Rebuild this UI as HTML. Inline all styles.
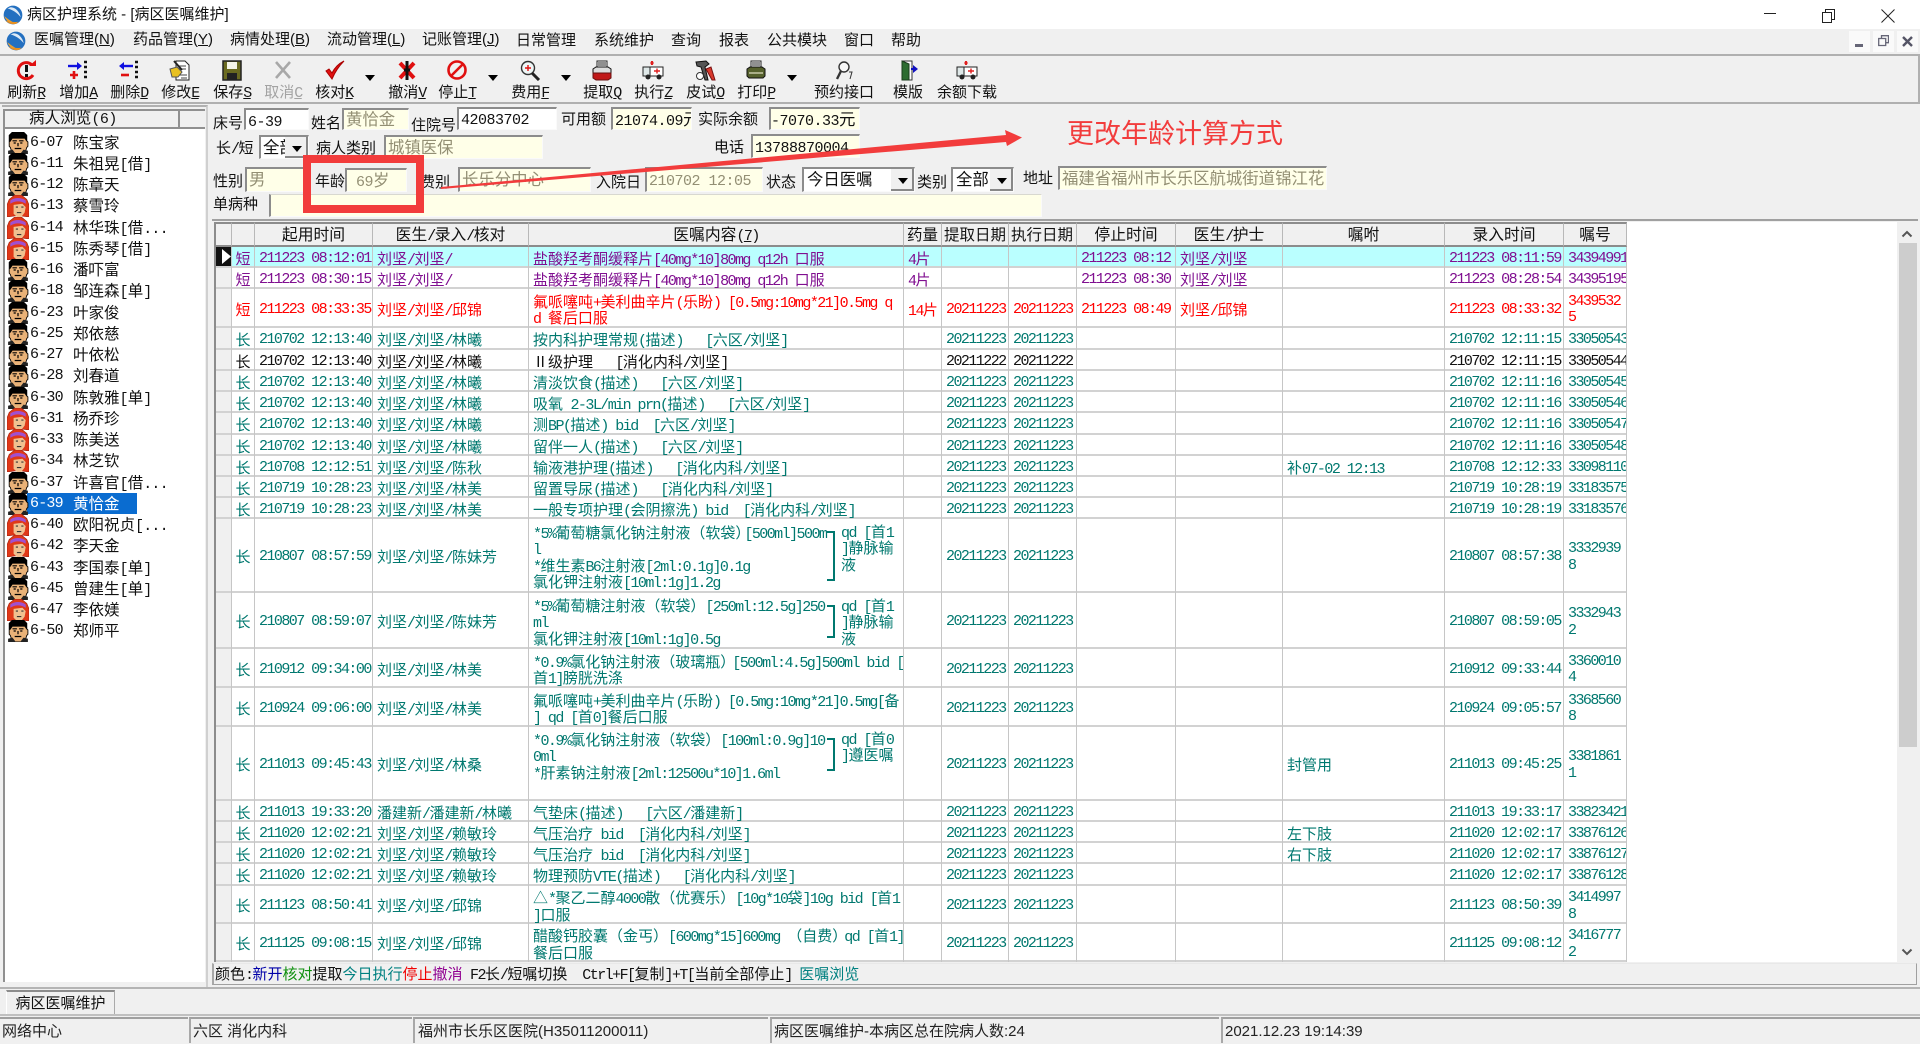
<!DOCTYPE html>
<html lang="zh-CN">
<head>
<meta charset="utf-8">
<title>病区护理系统</title>
<style>
*{box-sizing:border-box}
html,body{margin:0;padding:0}
body{width:1920px;height:1043px;overflow:hidden;position:relative;background:#f0f0f0;font:15px/20px "WenQuanYi Zen Hei","Noto Sans CJK SC",sans-serif;color:#111;white-space:pre}
.abs,.l,.i,.t,.ln,.st,.q,.br{position:absolute}
a{font-family:"Liberation Mono",monospace;letter-spacing:-1.55px;font-size:15px;line-height:10px}
u{font-family:"Liberation Mono",monospace;letter-spacing:-1.55px;line-height:10px}
.ms{font-family:"Liberation Sans","WenQuanYi Zen Hei",sans-serif}
.i{height:24px;border-top:2px solid #8c8c8c;border-left:2px solid #8c8c8c;border-right:1px solid #fafafa;border-bottom:1px solid #fafafa;background:#ffffe8;color:#938f74;padding:0 0 0 2px;line-height:19px;overflow:hidden;font-size:16.4px}
.i a{letter-spacing:-.5px}
.i.w{background:#fff;color:#111}.i.y{color:#111}
.sel{background:#fff;color:#111;border-top:2px solid #8c8c8c;border-left:2px solid #8c8c8c}
.sel:after{content:"";position:absolute;right:0;top:0;bottom:0;width:21px;background:#f0f0f0;border-bottom:2px solid #888;border-right:2px solid #888}
.sel:before{content:"";position:absolute;z-index:1;right:6px;top:9px;border:5px solid transparent;border-top:6px solid #000;border-bottom:0}
.t{top:60px;width:90px;margin-left:-45px;text-align:center}
.t svg{display:block;margin:0 auto;width:24px;height:21px}
.t span{display:block;margin-top:1px;line-height:20px}
.off{color:#a3a3a3}
.dr{position:absolute;top:75px;border:5.5px solid transparent;border-top:6px solid #000;border-bottom:0}
.m{position:absolute;top:30px;line-height:20px}
#list{position:absolute;left:8px;top:131.5px;width:196px;font-size:15.5px}
.ln{left:0;width:190px;height:21.26px;line-height:21px}
.ln svg{position:absolute;left:-1px;top:0;width:22px;height:22px}
.ln b{position:absolute;left:22px;font:15px/21px "Liberation Mono",monospace;letter-spacing:-.8px}
.ln i{position:absolute;left:65px;font-style:normal}
.ln i a{font-size:15px;letter-spacing:-.8px}
table{position:absolute;left:214px;top:222px;width:1413px;table-layout:fixed;border-collapse:separate;border-spacing:0;background:#fff;line-height:16.4px}
td,th{padding:3px 0 0 4px;overflow:hidden;border-right:1px solid #c6c6c6;box-shadow:inset 0 -2px 0 #d2d2d2;vertical-align:middle;text-align:left;font-weight:normal}
th{background:#f0f0f0;border-top:2px solid #8c8c8c;border-bottom:2px solid #8c8c8c;border-right:1px solid #b8b8b8;box-shadow:none;text-align:center;padding:0;color:#111;font-size:15.8px}
th.lf{text-align:left;padding-left:2px;font-size:15.5px}
td:first-child{background:#f0f0f0;border-left:2px solid #8c8c8c;padding:0}
th:first-child{border-left:2px solid #8c8c8c}
td:nth-child(2){text-align:center;padding-left:0;padding-right:0}
.n{font-family:"Liberation Mono",monospace;letter-spacing:-1.55px;font-size:15px}
.g td,.g{color:#00786f}.p td{color:#800f90}.r td{color:#f00}.k td{color:#111}
.p.c td:not(:first-child){background:#baffff}
.bk td:first-child{background:#111;position:relative}
.q{left:841px;line-height:16.4px;color:#00786f}
.br{left:827px;width:8px;border:2px solid #00786f;border-left:0}
.st{top:1017px;height:26px;border-top:2px solid #a0a0a0;border-left:2px solid #a8a8a8;line-height:25px;padding-left:2px;font-family:"Liberation Sans","WenQuanYi Zen Hei",sans-serif;font-size:15px;color:#222}
</style>
</head>
<body>
<svg width="0" height="0" style="position:absolute">
<defs>
<symbol id="mf" viewBox="0 0 20 20"><path d="M2 8V3l3-3h10l3 3v5l1 1v4l-1 1-1 3-3 3H7l-3-3-1-3-1-1V9z" fill="#e9b278" stroke="#000" stroke-width=".8"/><path d="M2 9V3l3-3h10l3 3v6l-2-3H5L3 9z" fill="#000"/><path d="M5 8h4M11 8h4M6 10h2M12 10h2M10 10v3M7 15h6" stroke="#000" stroke-width="1.1" fill="none"/><path d="M1 17l4-1 3 4H1zM19 17l-4-1-3 4h7z" fill="#222"/></symbol>
<symbol id="ff" viewBox="0 0 20 20"><path d="M0 20V9l2-5 5-4h6l5 4 2 5v11l-7-1H7z" fill="#e03818" stroke="#a02010" stroke-width=".6"/><path d="M3 5c4-3 10-3 14 0v3c-4-3-10-3-14 0z" fill="#a050d0"/><path d="M6 9l8-1 3 3-1 5-3 4H9l-3-3z" fill="#f0c090"/><path d="M8 11h2M13 11h2M9 16h4" stroke="#333" fill="none"/></symbol>
<symbol id="amb" viewBox="0 0 24 21"><path d="M11 1v4" stroke="#e02020" stroke-width="2"/><circle cx="11" cy="3" r="1.6" fill="#e02020"/><path d="M2 7h20v9H2z" fill="#fff" stroke="#222"/><path d="M2 7h7v9H2z" fill="#dfe8e8" stroke="#222"/><path d="M13 11h6M16 8.5v5" stroke="#e02020" stroke-width="1.4"/><circle cx="7" cy="17" r="2.5" fill="#222"/><circle cx="18" cy="17" r="2.5" fill="#222"/></symbol>
<symbol id="prn" viewBox="0 0 24 21"><path d="M7 1h10v7H7z" fill="#fff" stroke="#222"/><path d="M8 3h8M8 5h8" stroke="#222"/><path d="M3 9l3-2h12l3 2v7l-2 2H5l-2-2z" fill="#55602c" stroke="#111"/><path d="M5 13h14" stroke="#d0d0b0" stroke-width="1.4"/></symbol>
</defs>
</svg>

<!-- title bar -->
<div class="abs" style="left:0;top:0;width:1920px;height:29px;background:#fff"></div>
<svg class="abs" style="left:3px;top:4px" width="20" height="22" viewBox="0 0 18 20"><circle cx="9" cy="10" r="8.5" fill="#2470c0"/><path d="M1 11c2 5 7 8 11 7-3-1-7-4-11-7z" fill="#eea030"/><path d="M2 15c3 3 7 4 10 3l2-2c-4 1-9 0-12-1z" fill="#e89020"/><path d="M4 4c4 1 9 4 12 8-1-5-5-9-9-9z" fill="#fff" opacity=".85"/></svg>
<div class="abs ms" style="left:27px;top:5px;font-size:15px;color:#111">病区护理系统 - [病区医嘱维护]</div>
<div class="abs" style="left:1764px;top:13px;width:12px;height:1px;background:#222"></div>
<svg class="abs" style="left:1822px;top:9px" width="13" height="15" fill="none" stroke="#222"><path d="M.5 3.5h9v10h-9zM3.5 3V.5h9v10H10"/></svg>
<svg class="abs" style="left:1881px;top:9px" width="14" height="14" fill="none" stroke="#222"><path d="M.5.5l13 13M13.5.5l-13 13"/></svg>

<!-- menu -->
<div class="abs" style="left:0;top:29px;width:1920px;height:27px;background:#f0f0f0;border-bottom:2px solid #b0b0b0"></div>
<svg class="abs" style="left:6px;top:30px" width="20" height="22" viewBox="0 0 18 20"><circle cx="9" cy="10" r="8.5" fill="#2470c0"/><path d="M1 11c2 5 7 8 11 7-3-1-7-4-11-7z" fill="#eea030"/><path d="M2 15c3 3 7 4 10 3l2-2c-4 1-9 0-12-1z" fill="#e89020"/><path d="M4 4c4 1 9 4 12 8-1-5-5-9-9-9z" fill="#fff" opacity=".85"/></svg>
<div class="m ms" style="left:34px">医嘱管理(<span style="text-decoration:underline">N</span>)</div>
<div class="m ms" style="left:133px">药品管理(<span style="text-decoration:underline">Y</span>)</div>
<div class="m ms" style="left:230px">病情处理(<span style="text-decoration:underline">B</span>)</div>
<div class="m ms" style="left:327px">流动管理(<span style="text-decoration:underline">L</span>)</div>
<div class="m ms" style="left:422px">记账管理(<span style="text-decoration:underline">J</span>)</div>
<div class="m" style="left:516px">日常管理</div>
<div class="m" style="left:594px">系统维护</div>
<div class="m" style="left:671px">查询</div>
<div class="m" style="left:719px">报表</div>
<div class="m" style="left:767px">公共模块</div>
<div class="m" style="left:844px">窗口</div>
<div class="m" style="left:891px">帮助</div>
<div class="abs" style="left:1849px;top:31px;width:21px;height:21px;background:#fafafa"><div class="abs" style="left:6px;top:13px;width:8px;height:3px;background:#667"></div></div>
<div class="abs" style="left:1873px;top:31px;width:21px;height:21px;background:#fafafa"><svg class="abs" style="left:5px;top:4px" width="11" height="12" fill="none" stroke="#667" stroke-width="1.3"><path d="M.7 3.5h7v7h-7zM3.5 3V.7h7v7H8"/></svg></div>
<div class="abs" style="left:1897px;top:31px;width:21px;height:21px;background:#fafafa"><svg class="abs" style="left:5px;top:5px" width="11" height="11" stroke="#556" stroke-width="2.4"><path d="M1 1l9 9M10 1l-9 9"/></svg></div>

<!-- toolbar -->
<div class="abs" style="left:0;top:56px;width:1920px;height:48px;border-bottom:2px solid #b0b0b0;border-right:2px solid #b0b0b0"></div>
<div class="t" style="left:26px"><svg viewBox="0 0 24 21"><path d="M18 5a8 8 0 1 0 1 10" fill="none" stroke="#e01010" stroke-width="3"/><path d="M15 6h7V0z" fill="#e01010"/><path d="M11 5h3v7h-3zM11 14h3v3h-3z" fill="#111"/></svg><span>刷新<u>R</u></span></div>
<div class="t" style="left:78px"><svg viewBox="0 0 24 21"><path d="M2 6h10" stroke="#1010e0" stroke-width="2.4"/><path d="M11 2l5 4-5 4z" fill="#1010e0"/><path d="M8 11v8M4 15h8" stroke="#e01010" stroke-width="2.6"/><path d="M18 2h3M18 7h3M18 12h3M18 17h3" stroke="#111" stroke-width="2.6"/></svg><span>增加<u>A</u></span></div>
<div class="t" style="left:129px"><svg viewBox="0 0 24 21"><path d="M6 6h10" stroke="#1010e0" stroke-width="2.4"/><path d="M7 2L2 6l5 4z" fill="#1010e0"/><path d="M4 15h8" stroke="#e01010" stroke-width="2.6"/><path d="M18 2h3M18 7h3M18 12h3M18 17h3" stroke="#111" stroke-width="2.6"/></svg><span>删除<u>D</u></span></div>
<div class="t" style="left:180px"><svg viewBox="0 0 24 21"><path d="M8 1h9l4 4v15H8z" fill="#fff" stroke="#222"/><path d="M10 6h8M10 9h8M11 15h8M13 18h6" stroke="#444"/><path d="M2 9l7-2 5 5-4 5H4z" fill="#e8c020" stroke="#555"/><path d="M6 1l8 9" stroke="#222" stroke-width="2"/></svg><span>修改<u>E</u></span></div>
<div class="t" style="left:232px"><svg viewBox="0 0 24 21"><path d="M3 1h18v19H3z" fill="#6a6a20" stroke="#222" stroke-width="1.5"/><path d="M7 2h10v7H7z" fill="#f4f4e8"/><path d="M7 13h10v7H7z" fill="#222"/></svg><span>保存<u>S</u></span></div>
<div class="t off" style="left:283px"><svg viewBox="0 0 24 21"><path d="M5 2l14 16M19 2L5 18" stroke="#a8a8a8" stroke-width="2.6"/></svg><span>取消<u>C</u></span></div>
<div class="t" style="left:334px"><svg viewBox="0 0 24 21"><path d="M4 11l6 8C13 12 17 6 22 1c-6 3-10 8-12 12L7 9z" fill="#e01010" stroke="#a00"/></svg><span>核对<u>K</u></span></div>
<div class="dr" style="left:365px"></div>
<div class="t" style="left:407px"><svg viewBox="0 0 24 21"><path d="M5 3l14 15M19 3L5 18" stroke="#e01010" stroke-width="4"/><path d="M12 1v19" stroke="#111" stroke-width="3"/><path d="M9 10h6" stroke="#111" stroke-width="3"/></svg><span>撤消<u>V</u></span></div>
<div class="t" style="left:457px"><svg viewBox="0 0 24 21"><circle cx="12" cy="10" r="8.5" fill="none" stroke="#e01010" stroke-width="2.6"/><path d="M6 16L18 4" stroke="#e01010" stroke-width="2.6"/></svg><span>停止<u>T</u></span></div>
<div class="dr" style="left:488px"></div>
<div class="t" style="left:530px"><svg viewBox="0 0 24 21"><circle cx="10" cy="8" r="6.5" fill="#eef6f6" stroke="#333" stroke-width="1.4"/><path d="M7 8h6M10 5v6" stroke="#e01010" stroke-width="1.4"/><path d="M14 13l7 7" stroke="#222" stroke-width="3"/></svg><span>费用<u>F</u></span></div>
<div class="dr" style="left:561px"></div>
<div class="t" style="left:602px"><svg viewBox="0 0 24 21"><path d="M7 1h10v7H7z" fill="#fff" stroke="#222"/><path d="M8 3h8M8 5h8" stroke="#222"/><path d="M3 9l3-2h12l3 2v4H3z" fill="#ddd" stroke="#111"/><path d="M3 13h18v5l-3 2H6l-3-2z" fill="#c01818" stroke="#611"/></svg><span>提取<u>Q</u></span></div>
<div class="t" style="left:653px"><svg viewBox="0 0 24 21"><use href="#amb"/></svg><span>执行<u>Z</u></span></div>
<div class="t" style="left:705px"><svg viewBox="0 0 24 21"><path d="M3 2l10-1 3 3-4 3 3 13h-3L8 7 4 6z" fill="#555" stroke="#111"/><path d="M13 9l6 11h3l-4-13z" fill="#d8382c" stroke="#711"/><circle cx="7" cy="16" r="3.5" fill="#fff" stroke="#333"/></svg><span>皮试<u>O</u></span></div>
<div class="t" style="left:756px"><svg viewBox="0 0 24 21"><use href="#prn"/></svg><span>打印<u>P</u></span></div>
<div class="dr" style="left:787px"></div>
<div class="t" style="left:844px"><svg viewBox="0 0 24 21"><circle cx="12" cy="7" r="5" fill="#f8f8f8" stroke="#333" stroke-width="1.4"/><path d="M9 11l-4 8" stroke="#333" stroke-width="2.4"/><path d="M17 12h3l-2 7" fill="none" stroke="#333"/></svg><span>预约接口</span></div>
<div class="t" style="left:908px"><svg viewBox="0 0 24 21"><path d="M6 1h10v19H6z" fill="#fff" stroke="#333"/><path d="M6 1l7 3v16H6z" fill="#2c6c30" stroke="#1a3c1c"/><path d="M15 9h5" stroke="#1010c0" stroke-width="2"/><path d="M17 5l5 4-5 4z" fill="#1010c0"/></svg><span>模版</span></div>
<div class="t" style="left:967px"><svg viewBox="0 0 24 21"><use href="#amb"/></svg><span>余额下载</span></div>

<!-- left panel -->
<div class="abs" style="left:2px;top:105px;width:206px;height:882px;background:#f0f0f0;border-top:2px solid #b0b0b0;border-right:2px solid #d0d0d0"></div>
<div class="abs" style="left:3px;top:109px;width:202px;height:20px;border-top:2px solid #909090;border-left:2px solid #909090;border-bottom:2px solid #909090;background:#f0f0f0"></div>
<div class="abs" style="left:178px;top:111px;width:2px;height:16px;background:#909090"></div>
<div class="abs" style="left:29px;top:107px;line-height:21px;font-size:15.6px">病人浏览<a style="letter-spacing:-.5px">(6)</a></div>
<div class="abs" style="left:3px;top:129px;width:202px;height:853px;background:#fff;border-left:2px solid #909090"></div>
<div id="list">
<div class="ln" style="top:0"><svg><use href="#mf"/></svg><b>6-07</b><i>陈宝家</i></div>
<div class="ln" style="top:21.26px"><svg><use href="#mf"/></svg><b>6-11</b><i>朱祖晃<a>[</a>借<a>]</a></i></div>
<div class="ln" style="top:42.52px"><svg><use href="#mf"/></svg><b>6-12</b><i>陈章天</i></div>
<div class="ln" style="top:63.78px"><svg><use href="#ff"/></svg><b>6-13</b><i>蔡雪玲</i></div>
<div class="ln" style="top:85.04px"><svg><use href="#ff"/></svg><b>6-14</b><i>林华珠<a>[</a>借<a>...</a></i></div>
<div class="ln" style="top:106.3px"><svg><use href="#ff"/></svg><b>6-15</b><i>陈秀琴<a>[</a>借<a>]</a></i></div>
<div class="ln" style="top:127.56px"><svg><use href="#mf"/></svg><b>6-16</b><i>潘吓富</i></div>
<div class="ln" style="top:148.82px"><svg><use href="#mf"/></svg><b>6-18</b><i>邹连森<a>[</a>单<a>]</a></i></div>
<div class="ln" style="top:170.08px"><svg><use href="#mf"/></svg><b>6-23</b><i>叶家俊</i></div>
<div class="ln" style="top:191.34px"><svg><use href="#mf"/></svg><b>6-25</b><i>郑依慈</i></div>
<div class="ln" style="top:212.6px"><svg><use href="#mf"/></svg><b>6-27</b><i>叶依松</i></div>
<div class="ln" style="top:233.86px"><svg><use href="#mf"/></svg><b>6-28</b><i>刘春道</i></div>
<div class="ln" style="top:255.12px"><svg><use href="#mf"/></svg><b>6-30</b><i>陈敦雅<a>[</a>单<a>]</a></i></div>
<div class="ln" style="top:276.38px"><svg><use href="#ff"/></svg><b>6-31</b><i>杨乔珍</i></div>
<div class="ln" style="top:297.64px"><svg><use href="#ff"/></svg><b>6-33</b><i>陈美送</i></div>
<div class="ln" style="top:318.9px"><svg><use href="#ff"/></svg><b>6-34</b><i>林芝钦</i></div>
<div class="ln" style="top:340.16px"><svg><use href="#mf"/></svg><b>6-37</b><i>许喜官<a>[</a>借<a>...</a></i></div>
<div class="ln" style="top:361.42px"><div class="abs" style="left:19px;top:0;width:110px;height:21px;background:#0a6cd0"></div><svg><use href="#mf"/></svg><b style="color:#fff">6-39</b><i style="color:#fff">黄恰金</i></div>
<div class="ln" style="top:382.68px"><svg><use href="#ff"/></svg><b>6-40</b><i>欧阳祝贞<a>[...</a></i></div>
<div class="ln" style="top:403.94px"><svg><use href="#ff"/></svg><b>6-42</b><i>李天金</i></div>
<div class="ln" style="top:425.2px"><svg><use href="#mf"/></svg><b>6-43</b><i>李国泰<a>[</a>单<a>]</a></i></div>
<div class="ln" style="top:446.46px"><svg><use href="#mf"/></svg><b>6-45</b><i>曾建生<a>[</a>单<a>]</a></i></div>
<div class="ln" style="top:467.72px"><svg><use href="#ff"/></svg><b>6-47</b><i>李依媄</i></div>
<div class="ln" style="top:488.98px"><svg><use href="#mf"/></svg><b>6-50</b><i>郑师平</i></div>
</div>

<!-- form -->
<div class="l" style="left:213px;top:113px">床号</div>
<div class="i w" style="left:244px;top:108px;width:65px;height:22px;line-height:18px"><a>6-39</a></div>
<div class="l" style="left:311px;top:113px">姓名</div>
<div class="i" style="left:342px;top:108px;width:67px;height:22px;line-height:17px">黄恰金</div>
<div class="l" style="left:411px;top:115px">住院号</div>
<div class="i w" style="left:457px;top:107px;width:100px;height:23px;line-height:17px"><a>42083702</a></div>
<div class="l" style="left:561px;top:109px">可用额</div>
<div class="i y" style="left:611px;top:107px;width:81px;height:23px;line-height:18px"><a>21074.09</a>元</div>
<div class="l" style="left:698px;top:109px">实际余额</div>
<div class="i y" style="left:769px;top:107px;width:91px;height:23px;padding-left:0;line-height:18px"><a>-7070.33</a>元</div>

<div class="l" style="left:216px;top:138px">长<a>/</a>短</div>
<div class="i sel" style="left:259px;top:135px;width:50px;height:24px">全部</div>
<div class="l" style="left:316px;top:138px">病人类别</div>
<div class="i" style="left:384px;top:135px;width:159px;height:24px">城镇医保</div>
<div class="l" style="left:714px;top:137px">电话</div>
<div class="i y" style="left:751px;top:134px;width:109px;height:24px;line-height:18px"><a>13788870004</a></div>

<div class="l" style="left:213px;top:171px">性别</div>
<div class="i" style="left:245px;top:167px;width:60px;height:25px">男</div>
<div class="l" style="left:315px;top:171px">年龄</div>
<div class="i" style="left:345px;top:168px;width:62px;height:24px;padding-left:9px"><a>69</a>岁</div>
<div class="l" style="left:420px;top:172px">费别</div>
<div class="i" style="left:458px;top:167px;width:133px;height:25px">长乐分中心</div>
<div class="l" style="left:596px;top:172px">入院日</div>
<div class="i" style="left:645px;top:167px;width:118px;height:25px"><a>210702 12:05</a></div>
<div class="l" style="left:766px;top:172px">状态</div>
<div class="i sel" style="left:802px;top:167px;width:113px;height:25px;padding-left:3px">今日医嘱</div>
<div class="l" style="left:917px;top:172px">类别</div>
<div class="i sel" style="left:951px;top:167px;width:63px;height:25px;padding-left:3px">全部</div>
<div class="l" style="left:1023px;top:168px">地址</div>
<div class="i" style="left:1058px;top:166px;width:269px;height:24px">福建省福州市长乐区航城街道锦江花</div>
<div class="l" style="left:213px;top:194px">单病种</div>
<div class="i" style="left:269px;top:194px;width:773px;height:23px;border-top:1px solid #d8d8d0"></div>

<!-- grid -->
<div class="abs" style="left:212px;top:219px;width:1706px;height:2px;background:#a0a0a0"></div>
<div class="abs" style="left:1627px;top:222px;width:270px;height:740px;background:#fff"></div>
<div class="abs" style="left:1897px;top:222px;width:20px;height:740px;background:#f0f0f0"></div>
<div class="abs" style="left:1899px;top:243px;width:18px;height:504px;background:#cdcdcd"></div>
<svg class="abs" style="left:1901px;top:230px" width="12" height="8" fill="none" stroke="#555" stroke-width="2"><path d="M1.5 6.5L6 2l4.5 4.5"/></svg>
<svg class="abs" style="left:1901px;top:948px" width="12" height="8" fill="none" stroke="#555" stroke-width="2"><path d="M1.5 1.5L6 6l4.5-4.5"/></svg>

<table>
<colgroup><col style="width:18px"><col style="width:23px"><col style="width:118px"><col style="width:156px"><col style="width:375px"><col style="width:38px"><col style="width:67px"><col style="width:68px"><col style="width:99px"><col style="width:107px"><col style="width:162px"><col style="width:119px"><col style="width:63px"></colgroup>
<tr style="height:25px"><th></th><th></th><th>起用时间</th><th>医生<a>/</a>录入<a>/</a>核对</th><th>医嘱内容<a>(<span style="text-decoration:underline">7</span>)</a></th><th class="lf" style="padding-left:3px">药量</th><th class="lf">提取日期</th><th class="lf">执行日期</th><th>停止时间</th><th>医生<a>/</a>护士</th><th>嘱咐</th><th>录入时间</th><th>嘱号</th></tr>

<tr class="p c bk" style="height:21px"><td><svg style="position:absolute;left:5px;top:2px" width="11" height="15"><path d="M1 0l9 7.5L1 15z" fill="#fff"/></svg></td><td>短</td><td class="n">211223 08:12:01</td><td>刘坚<a>/</a>刘坚<a>/</a></td><td>盐酸羟考酮缓释片<a>[40mg*10]80mg q12h </a>口服</td><td><a>4</a>片</td><td></td><td></td><td class="n">211223 08:12</td><td>刘坚<a>/</a>刘坚</td><td></td><td class="n">211223 08:11:59</td><td class="n">34394991</td></tr>
<tr class="p" style="height:21px"><td></td><td>短</td><td class="n">211223 08:30:15</td><td>刘坚<a>/</a>刘坚<a>/</a></td><td>盐酸羟考酮缓释片<a>[40mg*10]80mg q12h </a>口服</td><td><a>4</a>片</td><td></td><td></td><td class="n">211223 08:30</td><td>刘坚<a>/</a>刘坚</td><td></td><td class="n">211223 08:28:54</td><td class="n">34395195</td></tr>
<tr class="r" style="height:39px"><td></td><td>短</td><td class="n">211223 08:33:35</td><td>刘坚<a>/</a>刘坚<a>/</a>邱锦</td><td>氟哌噻吨<a>+</a>美利曲辛片<a>(</a>乐盼<a>) [0.5mg:10mg*21]0.5mg q
d </a>餐后口服</td><td><a>14</a>片</td><td class="n">20211223</td><td class="n">20211223</td><td class="n">211223 08:49</td><td>刘坚<a>/</a>邱锦</td><td></td><td class="n">211223 08:33:32</td><td class="n">3439532
5</td></tr>
<tr class="g" style="height:22px"><td></td><td>长</td><td class="n">210702 12:13:40</td><td>刘坚<a>/</a>刘坚<a>/</a>林曦</td><td>按内科护理常规<a>(</a>描述<a>)   [</a>六区<a>/</a>刘坚<a>]</a></td><td></td><td class="n">20211223</td><td class="n">20211223</td><td></td><td></td><td></td><td class="n">210702 12:11:15</td><td class="n">33050543</td></tr>
<tr class="k" style="height:21px"><td></td><td>长</td><td class="n">210702 12:13:40</td><td>刘坚<a>/</a>刘坚<a>/</a>林曦</td><td>Ⅱ级护理<a>   [</a>消化内科<a>/</a>刘坚<a>]</a></td><td></td><td class="n">20211222</td><td class="n">20211222</td><td></td><td></td><td></td><td class="n">210702 12:11:15</td><td class="n">33050544</td></tr>
<tr class="g" style="height:21px"><td></td><td>长</td><td class="n">210702 12:13:40</td><td>刘坚<a>/</a>刘坚<a>/</a>林曦</td><td>清淡饮食<a>(</a>描述<a>)   [</a>六区<a>/</a>刘坚<a>]</a></td><td></td><td class="n">20211223</td><td class="n">20211223</td><td></td><td></td><td></td><td class="n">210702 12:11:16</td><td class="n">33050545</td></tr>
<tr class="g" style="height:21px"><td></td><td>长</td><td class="n">210702 12:13:40</td><td>刘坚<a>/</a>刘坚<a>/</a>林曦</td><td>吸氧<a> 2-3L/min prn(</a>描述<a>)   [</a>六区<a>/</a>刘坚<a>]</a></td><td></td><td class="n">20211223</td><td class="n">20211223</td><td></td><td></td><td></td><td class="n">210702 12:11:16</td><td class="n">33050546</td></tr>
<tr class="g" style="height:22px"><td></td><td>长</td><td class="n">210702 12:13:40</td><td>刘坚<a>/</a>刘坚<a>/</a>林曦</td><td>测<a>BP(</a>描述<a>) bid  [</a>六区<a>/</a>刘坚<a>]</a></td><td></td><td class="n">20211223</td><td class="n">20211223</td><td></td><td></td><td></td><td class="n">210702 12:11:16</td><td class="n">33050547</td></tr>
<tr class="g" style="height:21px"><td></td><td>长</td><td class="n">210702 12:13:40</td><td>刘坚<a>/</a>刘坚<a>/</a>林曦</td><td>留伴一人<a>(</a>描述<a>)   [</a>六区<a>/</a>刘坚<a>]</a></td><td></td><td class="n">20211223</td><td class="n">20211223</td><td></td><td></td><td></td><td class="n">210702 12:11:16</td><td class="n">33050548</td></tr>
<tr class="g" style="height:21px"><td></td><td>长</td><td class="n">210708 12:12:51</td><td>刘坚<a>/</a>刘坚<a>/</a>陈秋</td><td>输液港护理<a>(</a>描述<a>)   [</a>消化内科<a>/</a>刘坚<a>]</a></td><td></td><td class="n">20211223</td><td class="n">20211223</td><td></td><td></td><td>补<a>07-02 12:13</a></td><td class="n">210708 12:12:33</td><td class="n">33098110</td></tr>
<tr class="g" style="height:21px"><td></td><td>长</td><td class="n">210719 10:28:23</td><td>刘坚<a>/</a>刘坚<a>/</a>林美</td><td>留置导尿<a>(</a>描述<a>)   [</a>消化内科<a>/</a>刘坚<a>]</a></td><td></td><td class="n">20211223</td><td class="n">20211223</td><td></td><td></td><td></td><td class="n">210719 10:28:19</td><td class="n">33183575</td></tr>
<tr class="g" style="height:21px"><td></td><td>长</td><td class="n">210719 10:28:23</td><td>刘坚<a>/</a>刘坚<a>/</a>林美</td><td>一般专项护理<a>(</a>会阴擦洗<a>) bid  [</a>消化内科<a>/</a>刘坚<a>]</a></td><td></td><td class="n">20211223</td><td class="n">20211223</td><td></td><td></td><td></td><td class="n">210719 10:28:19</td><td class="n">33183576</td></tr>
<tr class="g" style="height:74px"><td></td><td>长</td><td class="n">210807 08:57:59</td><td>刘坚<a>/</a>刘坚<a>/</a>陈妹芳</td><td><a>*5%</a>葡萄糖氯化钠注射液（软袋）<a style="margin-left:-6px">[500ml]500m
l
*</a>维生素<a>B6</a>注射液<a>[2ml:0.1g]0.1g</a>
氯化钾注射液<a>[10ml:1g]1.2g</a></td><td></td><td class="n">20211223</td><td class="n">20211223</td><td></td><td></td><td></td><td class="n">210807 08:57:38</td><td class="n">3332939
8</td></tr>
<tr class="g" style="height:56px"><td></td><td>长</td><td class="n">210807 08:59:07</td><td>刘坚<a>/</a>刘坚<a>/</a>陈妹芳</td><td><a>*5%</a>葡萄糖注射液（软袋）<a>[250ml:12.5g]250
ml</a>
氯化钾注射液<a>[10ml:1g]0.5g</a></td><td></td><td class="n">20211223</td><td class="n">20211223</td><td></td><td></td><td></td><td class="n">210807 08:59:05</td><td class="n">3332943
2</td></tr>
<tr class="g" style="height:39px"><td></td><td>长</td><td class="n">210912 09:34:00</td><td>刘坚<a>/</a>刘坚<a>/</a>林美</td><td><a>*0.9%</a>氯化钠注射液（玻璃瓶）<a style="margin-left:-3px">[500ml:4.5g]500ml bid [</a>
首<a>1]</a>膀胱洗涤</td><td></td><td class="n">20211223</td><td class="n">20211223</td><td></td><td></td><td></td><td class="n">210912 09:33:44</td><td class="n">3360010
4</td></tr>
<tr class="g" style="height:39px"><td></td><td>长</td><td class="n">210924 09:06:00</td><td>刘坚<a>/</a>刘坚<a>/</a>林美</td><td>氟哌噻吨<a>+</a>美利曲辛片<a>(</a>乐盼<a>) [0.5mg:10mg*21]0.5mg[</a>备
<a>] qd [</a>首<a>0]</a>餐后口服</td><td></td><td class="n">20211223</td><td class="n">20211223</td><td></td><td></td><td></td><td class="n">210924 09:05:57</td><td class="n">3368560
8</td></tr>
<tr class="g" style="height:74px"><td></td><td>长</td><td class="n">211013 09:45:43</td><td>刘坚<a>/</a>刘坚<a>/</a>林桑</td><td style="vertical-align:top;padding-top:5px"><a>*0.9%</a>氯化钠注射液（软袋）<a>[100ml:0.9g]10
0ml
*</a>肝素钠注射液<a>[2ml:12500u*10]1.6ml</a></td><td></td><td class="n">20211223</td><td class="n">20211223</td><td></td><td></td><td>封管用</td><td class="n">211013 09:45:25</td><td class="n">3381861
1</td></tr>
<tr class="g" style="height:21px"><td></td><td>长</td><td class="n">211013 19:33:20</td><td>潘建新<a>/</a>潘建新<a>/</a>林曦</td><td>气垫床<a>(</a>描述<a>)   [</a>六区<a>/</a>潘建新<a>]</a></td><td></td><td class="n">20211223</td><td class="n">20211223</td><td></td><td></td><td></td><td class="n">211013 19:33:17</td><td class="n">33823421</td></tr>
<tr class="g" style="height:21px"><td></td><td>长</td><td class="n">211020 12:02:21</td><td>刘坚<a>/</a>刘坚<a>/</a>赖敏玲</td><td>气压治疗<a> bid  [</a>消化内科<a>/</a>刘坚<a>]</a></td><td></td><td class="n">20211223</td><td class="n">20211223</td><td></td><td></td><td>左下肢</td><td class="n">211020 12:02:17</td><td class="n">33876126</td></tr>
<tr class="g" style="height:21px"><td></td><td>长</td><td class="n">211020 12:02:21</td><td>刘坚<a>/</a>刘坚<a>/</a>赖敏玲</td><td>气压治疗<a> bid  [</a>消化内科<a>/</a>刘坚<a>]</a></td><td></td><td class="n">20211223</td><td class="n">20211223</td><td></td><td></td><td>右下肢</td><td class="n">211020 12:02:17</td><td class="n">33876127</td></tr>
<tr class="g" style="height:22px"><td></td><td>长</td><td class="n">211020 12:02:21</td><td>刘坚<a>/</a>刘坚<a>/</a>赖敏玲</td><td>物理预防<a>VTE(</a>描述<a>)   [</a>消化内科<a>/</a>刘坚<a>]</a></td><td></td><td class="n">20211223</td><td class="n">20211223</td><td></td><td></td><td></td><td class="n">211020 12:02:17</td><td class="n">33876128</td></tr>
<tr class="g" style="height:38px"><td></td><td>长</td><td class="n">211123 08:50:41</td><td>刘坚<a>/</a>刘坚<a>/</a>邱锦</td><td>△<a>*</a>聚乙二醇<a>4000</a>散（优赛乐）<a>[10g*10</a>袋<a>]10g bid [</a>首<a>1
]</a>口服</td><td></td><td class="n">20211223</td><td class="n">20211223</td><td></td><td></td><td></td><td class="n">211123 08:50:39</td><td class="n">3414997
8</td></tr>
<tr class="g" style="height:38px"><td></td><td>长</td><td class="n">211125 09:08:15</td><td>刘坚<a>/</a>刘坚<a>/</a>邱锦</td><td>醋酸钙胶囊（金丐）<a>[600mg*15]600mg </a>（自费）<a style="margin-left:-3px">qd [</a>首<a>1]</a>
餐后口服</td><td></td><td class="n">20211223</td><td class="n">20211223</td><td></td><td></td><td></td><td class="n">211125 09:08:12</td><td class="n">3416777
2</td></tr>
</table>

<!-- group brackets -->
<div class="br" style="top:531px;height:50px"></div>
<div class="q" style="top:524px"><a>qd [</a>首<a>1
]</a>静脉输
液</div>
<div class="br" style="top:605px;height:33px"></div>
<div class="q" style="top:598px"><a>qd [</a>首<a>1
]</a>静脉输
液</div>
<div class="br" style="top:738px;height:33px"></div>
<div class="q" style="top:731px"><a>qd [</a>首<a>0
]</a>遵医嘱</div>

<!-- legend -->
<div class="abs" style="left:212px;top:963px;width:1705px;height:22px;border:1px solid #a0a0a0;border-left:2px solid #a8a8a8;border-top:1px solid #e8e8e8;padding-left:1px;line-height:20px;background:#f0f0f0"><span style="color:#111">颜色<a>:</a></span><span style="color:#0000a8">新开</span><span style="color:#109010">核对</span><span style="color:#111">提取</span><span style="color:#008080">今日执行</span><span style="color:#f00000">停止</span><span style="color:#900090">撤消</span><span style="color:#111"><a> F2</a>长<a>/</a>短嘱切换<a>  Ctrl+F[</a>复制<a>]+T[</a>当前全部停止<a>] </a></span><span style="color:#008080">医嘱浏览</span></div>

<!-- tab area -->
<div class="abs" style="left:0;top:987px;width:1920px;height:2px;background:#b4b4b4"></div>
<div class="abs" style="left:6px;top:990px;width:109px;height:24px;background:#f0f0f0;border-top:2px solid #8c8c8c;border-left:1px solid #fff;border-right:1px solid #aaa;text-align:center;line-height:22px">病区医嘱维护</div>
<div class="abs" style="left:0;top:1014px;width:1920px;height:2px;background:#c0c0c0"></div>

<!-- status bar -->
<div class="st" style="left:0;width:188px;border-left:0">网络中心</div>
<div class="st" style="left:189px;width:223px">六区 消化内科</div>
<div class="st" style="left:413px;width:355px;padding-left:3px">福州市长乐区医院(H35011200011)</div>
<div class="st" style="left:770px;width:449px">病区医嘱维护-本病区总在院病人数:24</div>
<div class="st" style="left:1221px;width:699px">2021.12.23 19:14:39</div>

<!-- annotation overlay -->
<svg class="abs" style="left:0;top:0" width="1920" height="1043">
<polygon points="441,187 1006,135 1005,130 1022,137.5 1007,146 1006,142 441,189" fill="#f23c3c"/>
<rect x="307" y="159" width="113" height="50" fill="none" stroke="#f23c3c" stroke-width="8"/>
</svg>
<div class="abs" style="left:1067px;top:112px;font-size:27px;line-height:40px;color:#f23c3c">更改年龄计算方式</div>
</body>
</html>
